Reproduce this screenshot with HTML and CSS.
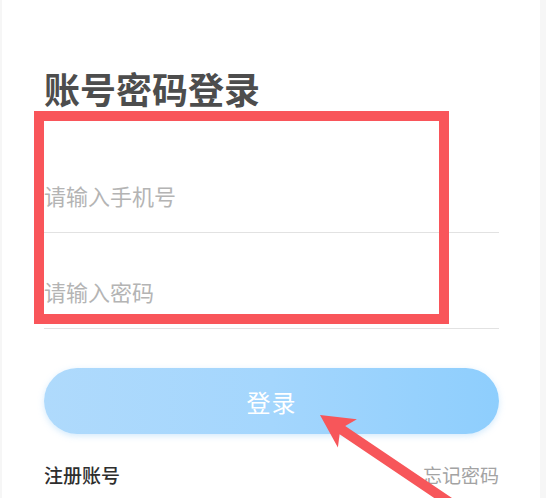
FILE: index.html
```html
<!DOCTYPE html>
<html lang="zh-CN">
  <head>
    <meta charset="UTF-8" />
    <meta name="viewport" content="width=device-width, initial-scale=1.0" />
    <title>账号密码登录</title>
    <link rel="stylesheet" href="styles.css">
  </head>
  <body>
    <div class="screen">
      <h1 class="title">账号密码登录</h1>
      <form class="loginForm">
        <input class="field" type="tel" placeholder="请输入手机号" />
        <input class="field" type="password" placeholder="请输入密码" />
        <button class="loginBtn" type="button">登录</button>
      </form>
      <div class="links">
        <a class="register">注册账号</a>
        <a class="forget">忘记密码</a>
      </div>
    </div>

    <!-- 标注：红框和箭头 -->
    <div class="markBox"></div>
    <svg class="markArrow" width="546" height="498" viewBox="0 0 546 498">
      <polygon fill="#f7565a" points="320,415 356.9,419.3 345.2,426 463.7,505.9 458.1,514.1 339.6,434.2 337.9,447.5" />
    </svg>
  </body>
</html>
```

FILE: styles.css
```css
html {
  height: 100%;
}
body {
  margin: 0;
  height: 100%;
  background-color: #f6f6f6;
  font-family: "Noto Sans CJK SC", "Noto Sans", sans-serif;
  overflow: hidden;
}
.screen {
  box-sizing: border-box;
  margin-left: 2px;
  width: 538px;
  height: 100%;
  padding: 66px 41px 0 42px;
  background-color: #fff;
}
.title {
  margin: 0;
  font-size: 36px;
  line-height: 44px;
  font-weight: 700;
  color: #4d4d4d;
}
.loginForm {
  display: flex;
  flex-direction: column;
  margin-top: 27px;
}
.field {
  box-sizing: border-box;
  height: 96px;
  padding: 20px 0 0 0;
  border: 0;
  border-bottom: 1px solid #e2e2e2;
  outline: none;
  background: transparent;
  font-family: inherit;
  font-size: 22px;
  color: #333;
}
.field::placeholder {
  color: #b4b4b4;
}
.loginBtn {
  margin-top: 39px;
  height: 66px;
  border: 0;
  border-radius: 33px;
  background: linear-gradient(90deg, #afdafc 0%, #a4d6fd 50%, #8ecefd 100%);
  box-shadow: 0 2px 6px rgba(130, 195, 245, 0.35);
  font-family: inherit;
  font-size: 24px;
  color: #fff;
  letter-spacing: 1px;
}
.links {
  display: flex;
  justify-content: space-between;
  margin-top: 28px;
  font-size: 19px;
  line-height: 26px;
}
.register {
  color: #2e2e2e;
  font-weight: 500;
}
.forget {
  color: #a3a3a3;
}
.markBox {
  position: absolute;
  top: 111px;
  left: 34px;
  width: 395px;
  height: 193px;
  border: 10px solid #f9555a;
}
.markArrow {
  position: absolute;
  top: 0;
  left: 0;
}
```
